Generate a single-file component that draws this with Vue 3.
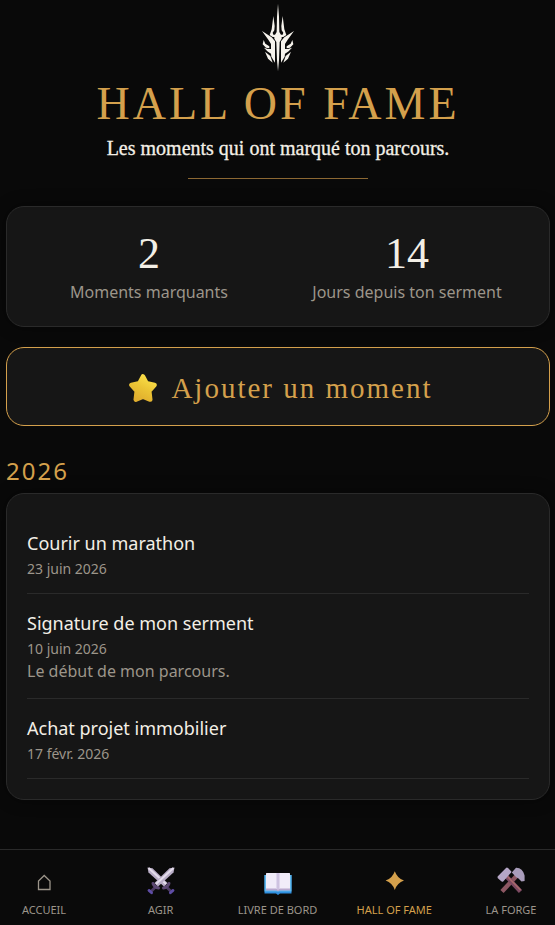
<script setup>
const stats = [
  { value: 2, label: 'Moments marquants' },
  { value: 14, label: 'Jours depuis ton serment' },
]

const years = [
  {
    year: 2026,
    moments: [
      { title: 'Courir un marathon', date: '23 juin 2026' },
      { title: 'Signature de mon serment', date: '10 juin 2026', note: 'Le début de mon parcours.' },
      { title: 'Achat projet immobilier', date: '17 févr. 2026' },
    ],
  },
]

const links = [
  { id: 'home', label: 'Accueil' },
  { id: 'swords', label: 'Agir' },
  { id: 'book', label: 'Livre de bord' },
  { id: 'spark', label: 'Hall of Fame', active: true },
  { id: 'hammers', label: 'La Forge' },
]
</script>

<template>
  <div class="page">
    <main class="content">
      <header class="hero">
        <svg class="emblem" viewBox="61 9 108 207" aria-hidden="true">
          <defs>
            <g id="emblem-half">
              <path d="M101 48 L105 78 L104 91 L99 98 L101 104 L107 104 L107 111 L99 111 L90 105 L96 88 Z" />
              <path d="M67 93 L96 112 L106 124 L106 188 L95 170 L94 161 L83 154 L73 143 L85 147 L94 147 L94 132 L86 119 Z" />
              <path d="M72 120 L77 131 L89 139 L89 145 L79 143 L69 133 Z" />
              <path d="M76 155 L92 168 L99 188 L85 176 Z" />
            </g>
          </defs>
          <path d="M115 11 L118 50 L119 96 L126 108 L126 116 L120 126 L118 180 L115 214 L112 180 L110 126 L104 116 L104 108 L111 96 L112 50 Z" />
          <use href="#emblem-half" />
          <use href="#emblem-half" transform="translate(230 0) scale(-1 1)" />
        </svg>
        <h1 class="title">HALL OF FAME</h1>
        <p class="subtitle">Les moments qui ont marqué ton parcours.</p>
        <div class="rule"></div>
      </header>

      <section class="card stats">
        <div v-for="stat in stats" :key="stat.label" class="stat">
          <span class="stat-value">{{ stat.value }}</span>
          <span class="stat-label">{{ stat.label }}</span>
        </div>
      </section>

      <button type="button" class="add">
        <svg class="star" viewBox="0 0 28 28" aria-hidden="true">
          <defs>
            <linearGradient id="star-fill" x1="0.8" y1="0" x2="0.3" y2="1">
              <stop offset="0" stop-color="#fbe04a" />
              <stop offset="0.5" stop-color="#ecc535" />
              <stop offset="1" stop-color="#e0ae2e" />
            </linearGradient>
          </defs>
          <path d="M14 2.5 L17.6 9.3 L25.5 11 L20.2 17 L21.2 25.5 L14 22.6 L6.8 25.5 L7.8 17 L2.5 11 L10.4 9.3 Z" fill="url(#star-fill)" stroke="url(#star-fill)" stroke-width="4.6" stroke-linejoin="round" />
        </svg>
        <span>Ajouter un moment</span>
      </button>

      <section v-for="group in years" :key="group.year" class="year">
        <h2 class="year-title">{{ group.year }}</h2>
        <ul class="card moments">
          <li v-for="moment in group.moments" :key="moment.title" class="moment">
            <h3 class="moment-title">{{ moment.title }}</h3>
            <p class="moment-date">{{ moment.date }}</p>
            <p v-if="moment.note" class="moment-note">{{ moment.note }}</p>
          </li>
        </ul>
      </section>
    </main>

    <nav class="nav">
      <a v-for="link in links" :key="link.id" href="#" class="nav-link" :class="{ active: link.active }">
        <svg v-if="link.id === 'home'" class="nav-icon" viewBox="0 0 28 28" aria-hidden="true">
          <path d="M8.5 22.5 V14 L14.2 8.5 L20 14 V22.5 Z" fill="none" stroke="currentColor" stroke-width="1.3" />
        </svg>
        <svg v-else-if="link.id === 'swords'" class="nav-icon" viewBox="0 0 28 28" aria-hidden="true">
          <defs>
            <g id="sword">
              <path d="M19.5 20 L24 24.5" stroke="#4d3b63" stroke-width="2.8" />
              <path d="M16.5 21 Q20.5 20.5 22 16.5" fill="none" stroke="#5c4872" stroke-width="3" stroke-linecap="round" />
              <path d="M23.4 25.8 L26 23.4" stroke="#5f4da6" stroke-width="2.8" stroke-linecap="round" />
              <path d="M0.5 0.5 L5.5 1.2 L20.5 16 L17 19.5 L1.5 5.5 Z" fill="#b9adc6" />
              <path d="M1.5 1 L19 17" stroke="#e4ddeb" stroke-width="2" />
            </g>
          </defs>
          <use href="#sword" />
          <use href="#sword" transform="translate(28 0) scale(-1 1)" />
        </svg>
        <svg v-else-if="link.id === 'book'" class="nav-icon" viewBox="0 0 28 28" aria-hidden="true">
          <path d="M0.5 8 H27.5 V26.5 H16 L14 28 L12 26.5 H0.5 Z" fill="#2f8fe0" />
          <path d="M0.5 8 H27.5 V24.5 H0.5 Z" fill="#5fb9ee" />
          <path d="M2 7 Q2 6 3 6 H25 Q26 6 26 7 V23.5 H15.5 L14 24.6 L12.5 23.5 H2 Z" fill="#b9a9cf" />
          <path d="M2 7 Q2 6 3 6 H25 Q26 6 26 7 V21.5 H15.5 L14 22.6 L12.5 21.5 H2 Z" fill="#f1ecf9" />
          <path d="M12.3 6 H15.7 V21.5 L14 22.6 L12.3 21.5 Z" fill="#d8cdea" />
          <path d="M14 6.5 V22" stroke="#c0b3d3" stroke-width="0.8" />
        </svg>
        <svg v-else-if="link.id === 'spark'" class="nav-icon" viewBox="0 0 28 28" aria-hidden="true">
          <path d="M14.8 4.2 Q17.2 11.2 24 13.6 Q17.2 16 14.8 23 Q12.4 16 5.6 13.6 Q12.4 11.2 14.8 4.2 Z" fill="currentColor" />
        </svg>
        <svg v-else class="nav-icon" viewBox="0 0 28 28" aria-hidden="true">
          <path d="M19.5 9 L5 24.5" stroke="#8d5763" stroke-width="4.4" />
          <path d="M9 9 L23.5 24.5" stroke="#7d4a62" stroke-width="4.4" />
          <path d="M10.5 9.5 L23.5 23" stroke="#a8696b" stroke-width="1.6" />
          <path d="M0.6 9.5 L9 0.9 Q10 0.2 11 1 L14.4 4.4 Q14.6 5.8 13.2 6.6 L6.2 14.4 Q5 15 4 14 L0.6 11 Z" fill="#b5a6c6" />
          <path d="M14.8 5.5 L19 0.8 Q25.5 0.5 27.6 8.5 V14 L24.5 14.4 L21.5 11.5 L19 10 Z" fill="#a99dbb" />
        </svg>
        <span class="nav-label">{{ link.label }}</span>
      </a>
    </nav>
  </div>
</template>

<style>
body {
  margin: 0;
  background: #090909;
}
</style>

<style scoped>
.page {
  min-height: 100vh;
  display: flex;
  flex-direction: column;
  background: #090909;
  color: #f3efe6;
  font-family: "Segoe UI", "Noto Sans", sans-serif;
}

.content {
  flex: 1;
  padding: 3px 5px 20px 6px;
}

.hero {
  display: flex;
  flex-direction: column;
  align-items: center;
  text-align: center;
}

.emblem {
  width: 36px;
  height: 69px;
  fill: #f6f3ec;
}

.title {
  margin: 6px 0 0;
  font: 400 46px/52px "Liberation Serif", serif;
  letter-spacing: 3px;
  color: #d4a04c;
}

.subtitle {
  margin: 6px 0 0;
  font: 400 20px/24px "Liberation Serif", serif;
  -webkit-text-stroke: 0.3px currentColor;
}

.rule {
  width: 180px;
  height: 1px;
  margin-top: 18px;
  background: #8c6833;
}

.card {
  background: #161616;
  border: 1px solid #2a2a2a;
  border-radius: 18px;
  box-shadow: 0 0 16px rgba(0, 0, 0, 0.4);
}

.stats {
  display: grid;
  grid-template-columns: 1fr 1fr;
  margin-top: 27px;
  padding: 21px 13px;
}

.stat {
  display: flex;
  flex-direction: column;
  align-items: center;
}

.stat-value {
  font: 400 44px/52px "Liberation Serif", serif;
}

.stat-label {
  font-size: 16px;
  line-height: 25px;
  color: #9c958a;
}

.add {
  display: flex;
  align-items: center;
  justify-content: center;
  gap: 14px;
  width: 100%;
  margin-top: 20px;
  padding: 23px 0 20px 6px;
  background: #161616;
  border: 1px solid #d4a04c;
  border-radius: 18px;
  color: #d4a04c;
  font: 400 29px/34px "Liberation Serif", serif;
  letter-spacing: 2px;
  cursor: pointer;
}

.star {
  width: 28px;
  height: 28px;
}

.year {
  margin-top: 28px;
}

.year-title {
  margin: 0;
  font-size: 24px;
  font-weight: 400;
  line-height: 34px;
  letter-spacing: 2px;
  color: #d4a04c;
}

.moments {
  margin: 5px 0 0;
  padding: 20px;
  list-style: none;
}

.moment {
  padding: 16px 0 13px;
  border-bottom: 1px solid #2a2a2a;
}

.moment-title {
  margin: 0;
  font-size: 18px;
  font-weight: 400;
  line-height: 27px;
}

.moment-date {
  margin: 0;
  font-size: 14px;
  line-height: 23px;
  color: #9c958a;
}

.moment-note {
  margin: 0 0 2px;
  font-size: 16px;
  line-height: 23px;
  color: #9c958a;
}

.nav {
  position: sticky;
  bottom: 0;
  display: flex;
  justify-content: space-between;
  padding: 17px 0 7px;
  background: #0a0a0a;
  border-top: 1px solid #2a2a2a;
}

.nav-link {
  display: flex;
  flex-direction: column;
  align-items: center;
  gap: 7px;
  width: 88px;
  color: #9c958a;
  text-decoration: none;
}

.nav-link.active {
  color: #d4a04c;
}

.nav-icon {
  width: 28px;
  height: 28px;
}

.nav-label {
  font-size: 11px;
  line-height: 16px;
  text-transform: uppercase;
  white-space: nowrap;
}
</style>
